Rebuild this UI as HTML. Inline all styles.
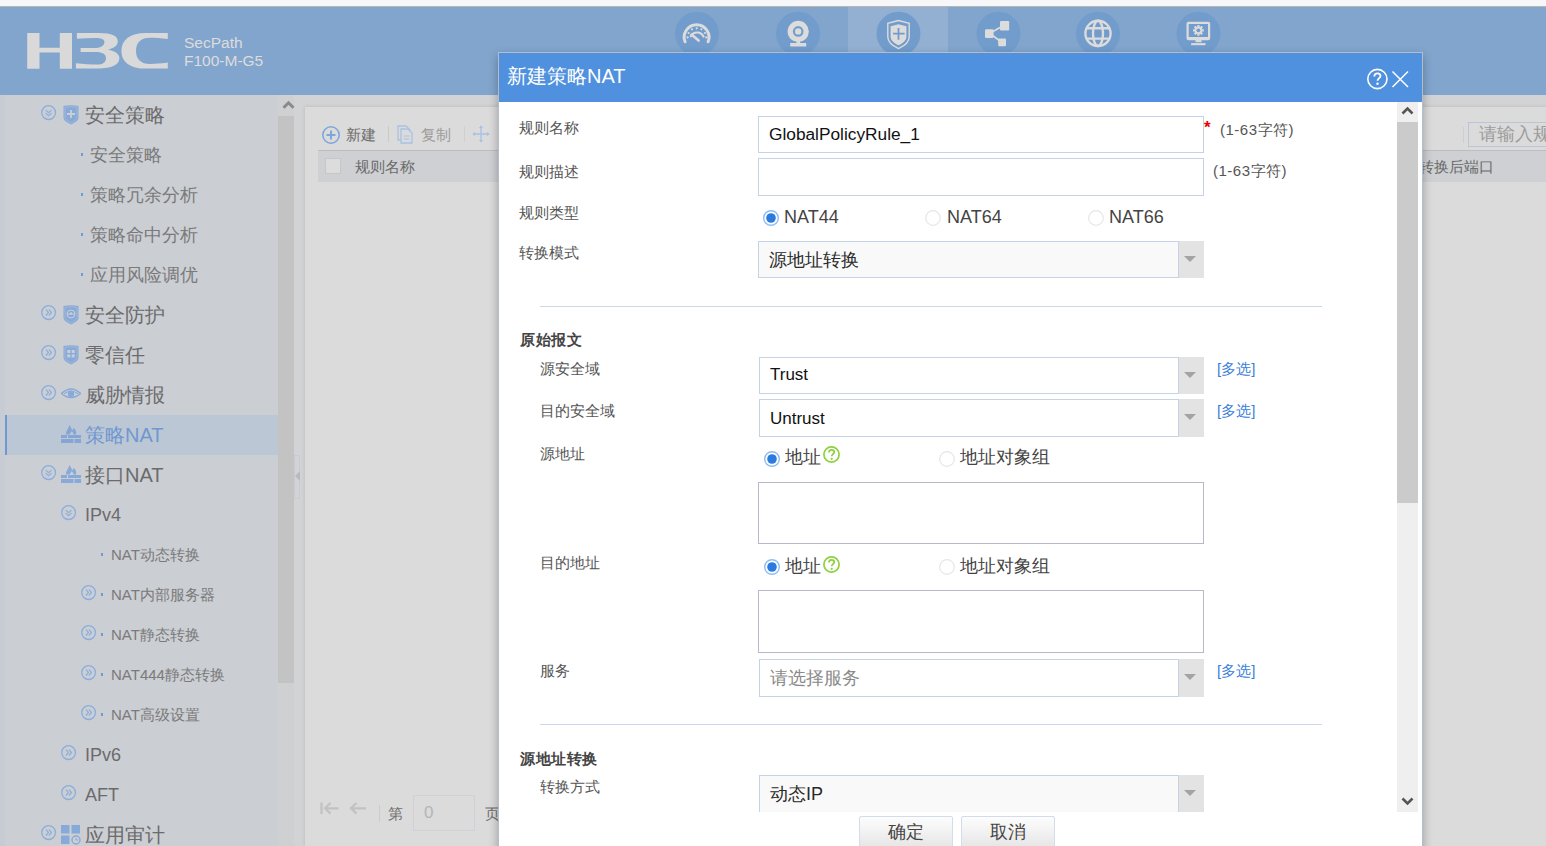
<!DOCTYPE html>
<html><head><meta charset="utf-8">
<style>
*{box-sizing:border-box;margin:0;padding:0}
html,body{width:1546px;height:846px;overflow:hidden;background:#d2d3d5;font-family:"Liberation Sans",sans-serif;}
.a{position:absolute;white-space:nowrap}
#top{left:0;top:0;width:1546px;height:7px;background:#f7f7f9;border-bottom:1px solid #b9b6b0}
#hdr{left:0;top:7px;width:1546px;height:88px;background:#82a5cd}
#side{left:0;top:95px;width:278px;height:751px;background:#cbced3}
#sidestrip{left:0;top:95px;width:5px;height:751px;background:#c7ccd4}
#sb{left:278px;top:95px;width:16px;height:751px;background:#cfd0d1}
#sbthumb{left:278px;top:116px;width:16px;height:567px;background:#c3c3c3}
#panel{left:305px;top:107px;width:1241px;height:739px;background:#dbdbdb;box-shadow:0 0 4px rgba(0,0,0,.12)}
.l1{font-size:20px;color:#6b6b6b;line-height:20px}
.l2{font-size:18px;color:#7a7a7a;line-height:18px}
.l3{font-size:15px;color:#7a7a7a;line-height:15px}
.dot{width:2px;height:3px;margin-top:-1px;background:#6e9ad3}
#dlg{left:498px;top:52px;width:925px;height:800px;background:#fff;border:1px solid #b4bdca;box-shadow:0 4px 9px rgba(0,0,0,.3)}
#dtitle{left:499px;top:53px;width:923px;height:49px;background:#4f91de}
.lbl{font-size:15px;color:#555;line-height:15px}
.inp{background:#fff;border:1px solid #c6d2e6}
.sel{background:#fff;border:1px solid #c6d2e6}
.ddb{background:#e3e3e3}
.arr{width:0;height:0;border-left:6px solid transparent;border-right:6px solid transparent;border-top:6px solid #a3a3a3}
.txt{font-size:17.3px;color:#111;line-height:17px}
.link{font-size:15px;color:#3a80da;line-height:15px}
.rad{width:16px;height:16px;border-radius:50%}
.rad.on{background:#2a7ae0;border:3px solid #fff;box-shadow:0 0 0 1.5px #8cbcf2 inset, 0 0 0 1.5px #8cbcf2}
.rad.off{border:1.5px solid #e6e6e6;background:#fff}
.opt{font-size:18px;color:#444;line-height:18px}
.hr{height:1px;background:#cdd8ea}
.btn{width:94px;height:32px;border:1px solid #d3dcea;border-radius:2px;background:linear-gradient(#fdfdfd,#e6e6e6);font-size:18px;color:#444;text-align:center;line-height:30px}
</style></head><body>
<div id="top" class="a"></div>
<div id="hdr" class="a"></div>
<svg class="a" style="left:0;top:0" width="1546" height="95" viewBox="0 0 1546 95">
<g fill="#d9d9d9">
<path d="M27.2,33.1H39.5V47.8H59.8V33.1H72V68.8H59.8V52.4H39.5V68.8H27.2Z"/>
<path d="M76.9,33.1H99C112,33.1 117.8,36 117.8,41.6C117.8,45.5 114,48.3 108,49.7C115,51 119.4,53.8 119.4,58.1C119.4,65 112,68.6 98,68.6H75.9V63.3C84,64.2 91,64.6 97,64.6C103,64.6 106,62 106,58.2C106,54.3 102.5,52.1 96,52.1H80.6V48H95C101,48 104.4,45.6 104.4,42C104.4,39.4 101.5,38.1 95,38.1C89,38.1 83,38.4 76.9,38.8Z"/>
<path d="M167.8,33.1H146C130,33.1 121.4,40 121.4,50.9C121.4,62 130,68.6 146,68.6H167.8V62.6C161,63.6 155,64 150,64C141,64 136,59 136,50.9C136,42.5 141,37.8 150,37.8C155,37.8 161,38.2 167.8,39Z"/>
</g>
<text x="184" y="48" font-family="Liberation Sans" font-size="15.5" fill="#dcdcdc">SecPath</text>
<text x="184" y="66" font-family="Liberation Sans" font-size="15.5" fill="#dcdcdc">F100-M-G5</text>
<rect x="848" y="7" width="100" height="88" fill="#93b0d2"/>
<g fill="#729ccb">
<circle cx="697" cy="33.7" r="22"/>
<circle cx="798" cy="33.7" r="22"/>
<circle cx="898.5" cy="33.7" r="22"/>
<circle cx="998.5" cy="33.7" r="22"/>
<circle cx="1098" cy="33.7" r="22"/>
<circle cx="1198.5" cy="33.7" r="22"/>
</g>
<g fill="none" stroke="#dcdcdc" stroke-linecap="round">
<!-- gauge -->
<path d="M685.1,41.8 A12.4,12.4 0 1 1 708.1,41.8" stroke-width="3"/>
<path d="M690.8,36.2 A7.2,7.2 0 0 1 703.6,36.6" stroke-width="2.2"/>
<path d="M691.5,34.6 L698.6,40.6" stroke-width="2.6"/>
</g>
<g fill="#dcdcdc">
<circle cx="687.6" cy="37.4" r="1.1"/><circle cx="688.6" cy="33" r="1.1"/><circle cx="692" cy="29.3" r="1.1"/>
<circle cx="696.7" cy="28.3" r="1.1"/><circle cx="701.4" cy="29.3" r="1.1"/><circle cx="705" cy="33" r="1.1"/><circle cx="706.3" cy="37.4" r="1.1"/>
</g>
<!-- webcam -->
<circle cx="798.2" cy="31.4" r="10.6" fill="#dcdcdc"/>
<circle cx="798.2" cy="31.4" r="5.3" fill="#729ccb"/>
<circle cx="798.2" cy="31.4" r="3.2" fill="#dcdcdc"/>
<rect x="796.5" y="40" width="3.6" height="4" fill="#dcdcdc"/>
<rect x="790.2" y="43" width="16" height="3.5" fill="#dcdcdc"/>
<!-- shield -->
<path d="M898.5,20.5 L887.8,23.3 V37 C887.8,42 893,46 898.5,48.6 C904,46 909.2,42 909.2,37 V23.3Z" fill="none" stroke="#dcdcdc" stroke-width="1.4"/>
<path d="M898.5,24.2 L890.6,26.3 V36.8 C890.6,40.5 894.5,43.5 898.5,45.3 C902.5,43.5 906.4,40.5 906.4,36.8 V26.3Z" fill="#dcdcdc"/>
<path d="M893,33.6 H904.6 M898.5,28 V39.7" stroke="#729ccb" stroke-width="1.8"/>
<!-- share -->
<g fill="#dcdcdc">
<rect x="1000" y="21" width="9.2" height="9.4" rx="1.2"/>
<rect x="985" y="29.3" width="8.6" height="8.6" rx="1.2"/>
<rect x="998.2" y="38.4" width="7.8" height="7.8" rx="1.2"/>
</g>
<path d="M992,32 L1001,27 M992,35 L1000,41" stroke="#dcdcdc" stroke-width="1.6"/>
<!-- globe -->
<g fill="none" stroke="#dcdcdc" stroke-width="2.4">
<circle cx="1098" cy="33.4" r="12.6"/>
<ellipse cx="1098" cy="33.4" rx="5" ry="12.6"/>
<path d="M1087,28.3 H1109 M1087,38.6 H1109"/>
</g>
<!-- monitor -->
<g fill="#dcdcdc">
<path d="M1188.5,21.8 H1208.2 A2,2 0 0 1 1210.2,23.8 V38.3 A2,2 0 0 1 1208.2,40.3 H1188.5 A2,2 0 0 1 1186.5,38.3 V23.8 A2,2 0 0 1 1188.5,21.8Z M1188.7,24 V37 H1208 V24Z" fill-rule="evenodd"/>
<rect x="1195.5" y="40" width="6" height="2.2"/>
<rect x="1191.2" y="43.1" width="14.3" height="2.1"/>
</g>
<g transform="translate(1198.4,30.3)">
<g stroke="#dcdcdc" stroke-width="2.2"><path d="M0,-5.4V5.4M-5.4,0H5.4M-3.8,-3.8L3.8,3.8M-3.8,3.8L3.8,-3.8"/></g>
<circle r="3.9" fill="#dcdcdc"/>
<circle r="1.9" fill="#729ccb"/>
</g>
</svg>

<div id="side" class="a"></div>
<div id="sidestrip" class="a"></div>
<div id="sb" class="a"></div>
<div id="sbthumb" class="a"></div>
<div id="panel" class="a"></div>
<!--SIDEBAR-->
<div class="a" style="left:5px;top:415px;width:273px;height:40px;background:#bcc7d5;border-left:2px solid #6e98d0"></div>
<svg class="a" style="left:41px;top:104.7px" width="16" height="16" viewBox="0 0 16 16"><circle cx="7.6" cy="7.6" r="6.9" fill="none" stroke="#8aaedd" stroke-width="1.3"/><path d="M4.7,5.1 L7.6,7.7 L10.5,5.1 M4.7,8.1 L7.6,10.7 L10.5,8.1" fill="none" stroke="#8aaedd" stroke-width="1.2"/></svg>
<svg class="a" style="left:63px;top:105px" width="16" height="20" viewBox="0 0 16 20"><path d="M0.5,1 Q8,-0.5 15.5,1 V13 Q15.5,16 8,19.5 Q0.5,16 0.5,13Z" fill="#88aad8"/><path d="M2,2.3 Q8,1.2 14,2.3 V12.8 Q14,15 8,18 Q2,15 2,12.8Z" fill="none" stroke="#cbced3" stroke-width="0.6" opacity=".6"/><path d="M8,5 V13 M4,9 H12" stroke="#cbced3" stroke-width="1.8"/></svg>
<div class="a l1" style="left:85px;top:105px;color:#6b6b6b">安全策略</div>
<div class="a dot" style="left:81px;top:154px"></div>
<div class="a l2" style="left:90px;top:146px">安全策略</div>
<div class="a dot" style="left:81px;top:194px"></div>
<div class="a l2" style="left:90px;top:186px">策略冗余分析</div>
<div class="a dot" style="left:81px;top:234px"></div>
<div class="a l2" style="left:90px;top:226px">策略命中分析</div>
<div class="a dot" style="left:81px;top:274px"></div>
<div class="a l2" style="left:90px;top:266px">应用风险调优</div>
<svg class="a" style="left:41px;top:304.7px" width="16" height="16" viewBox="0 0 16 16"><circle cx="7.6" cy="7.6" r="6.9" fill="none" stroke="#8aaedd" stroke-width="1.3"/><path d="M4.9,4.7 L7.5,7.6 L4.9,10.5 M7.9,4.7 L10.5,7.6 L7.9,10.5" fill="none" stroke="#8aaedd" stroke-width="1.2"/></svg>
<svg class="a" style="left:63px;top:305px" width="16" height="20" viewBox="0 0 16 20"><path d="M0.5,1 Q8,-0.5 15.5,1 V13 Q15.5,16 8,19.5 Q0.5,16 0.5,13Z" fill="#88aad8"/><path d="M2,2.3 Q8,1.2 14,2.3 V12.8 Q14,15 8,18 Q2,15 2,12.8Z" fill="none" stroke="#cbced3" stroke-width="0.6" opacity=".6"/><circle cx="8" cy="9" r="4" fill="none" stroke="#cbced3" stroke-width="1"/><path d="M4,9 H12" stroke="#cbced3" stroke-width="1"/><circle cx="8" cy="8.5" r="1.2" fill="#cbced3"/></svg>
<div class="a l1" style="left:85px;top:305px;color:#6b6b6b">安全防护</div>
<svg class="a" style="left:41px;top:344.7px" width="16" height="16" viewBox="0 0 16 16"><circle cx="7.6" cy="7.6" r="6.9" fill="none" stroke="#8aaedd" stroke-width="1.3"/><path d="M4.9,4.7 L7.5,7.6 L4.9,10.5 M7.9,4.7 L10.5,7.6 L7.9,10.5" fill="none" stroke="#8aaedd" stroke-width="1.2"/></svg>
<svg class="a" style="left:63px;top:345px" width="16" height="20" viewBox="0 0 16 20"><path d="M0.5,1 Q8,-0.5 15.5,1 V13 Q15.5,16 8,19.5 Q0.5,16 0.5,13Z" fill="#88aad8"/><path d="M2,2.3 Q8,1.2 14,2.3 V12.8 Q14,15 8,18 Q2,15 2,12.8Z" fill="none" stroke="#cbced3" stroke-width="0.6" opacity=".6"/><g fill="#cbced3"><rect x="4.3" y="5" width="3" height="3"/><rect x="8.7" y="5" width="3" height="3"/><rect x="4.3" y="9.4" width="3" height="3"/><rect x="8.7" y="9.4" width="3" height="3"/></g></svg>
<div class="a l1" style="left:85px;top:345px;color:#6b6b6b">零信任</div>
<svg class="a" style="left:41px;top:384.7px" width="16" height="16" viewBox="0 0 16 16"><circle cx="7.6" cy="7.6" r="6.9" fill="none" stroke="#8aaedd" stroke-width="1.3"/><path d="M4.9,4.7 L7.5,7.6 L4.9,10.5 M7.9,4.7 L10.5,7.6 L7.9,10.5" fill="none" stroke="#8aaedd" stroke-width="1.2"/></svg>
<svg class="a" style="left:61px;top:387px" width="20" height="14" viewBox="0 0 20 14"><path d="M0.5,6.5 Q10,-2.5 19.5,6.5 Q10,14.5 0.5,6.5Z" fill="none" stroke="#88aad8" stroke-width="1.6"/><path d="M3,6.8 Q10,1.5 17,6.8" fill="none" stroke="#88aad8" stroke-width="1"/><circle cx="10" cy="6.8" r="3.2" fill="#88aad8"/></svg>
<div class="a l1" style="left:85px;top:385px;color:#6b6b6b">威胁情报</div>
<svg class="a" style="left:61px;top:425px" width="20" height="19" viewBox="0 0 20 19"><path d="M5,9.5 C4.6,6.5 7.5,3.5 8.6,0 C10,2.5 11,4.2 11.2,5.5 C11.8,4.6 12.3,3.8 12.6,2.8 C15.2,5 15.6,8 15,9.5 H12.5 C12.5,8 11.5,6.8 10.5,6.3 C10,7.5 9,8.5 8.5,9.5Z" fill="#85a6d4"/><g fill="#85a6d4"><rect x="0" y="10" width="6" height="3"/><rect x="7" y="10" width="13" height="3"/><rect x="0" y="14" width="12.5" height="4"/><rect x="13.5" y="14" width="6.5" height="4"/></g></svg>
<div class="a l1" style="left:85px;top:425px;color:#6f98d0">策略NAT</div>
<svg class="a" style="left:41px;top:464.7px" width="16" height="16" viewBox="0 0 16 16"><circle cx="7.6" cy="7.6" r="6.9" fill="none" stroke="#8aaedd" stroke-width="1.3"/><path d="M4.7,5.1 L7.6,7.7 L10.5,5.1 M4.7,8.1 L7.6,10.7 L10.5,8.1" fill="none" stroke="#8aaedd" stroke-width="1.2"/></svg>
<svg class="a" style="left:61px;top:465px" width="20" height="19" viewBox="0 0 20 19"><path d="M5,9.5 C4.6,6.5 7.5,3.5 8.6,0 C10,2.5 11,4.2 11.2,5.5 C11.8,4.6 12.3,3.8 12.6,2.8 C15.2,5 15.6,8 15,9.5 H12.5 C12.5,8 11.5,6.8 10.5,6.3 C10,7.5 9,8.5 8.5,9.5Z" fill="#88aad8"/><g fill="#88aad8"><rect x="0" y="10" width="6" height="3"/><rect x="7" y="10" width="13" height="3"/><rect x="0" y="14" width="12.5" height="4"/><rect x="13.5" y="14" width="6.5" height="4"/></g></svg>
<div class="a l1" style="left:85px;top:465px;color:#6b6b6b">接口NAT</div>
<svg class="a" style="left:61px;top:504.7px" width="16" height="16" viewBox="0 0 16 16"><circle cx="7.6" cy="7.6" r="6.9" fill="none" stroke="#8aaedd" stroke-width="1.3"/><path d="M4.7,5.1 L7.6,7.7 L10.5,5.1 M4.7,8.1 L7.6,10.7 L10.5,8.1" fill="none" stroke="#8aaedd" stroke-width="1.2"/></svg>
<div class="a l1" style="left:85px;top:505px;font-size:18px">IPv4</div>
<div class="a dot" style="left:101px;top:554px"></div>
<div class="a l3" style="left:111px;top:547px">NAT动态转换</div>
<svg class="a" style="left:81px;top:584.7px" width="16" height="16" viewBox="0 0 16 16"><circle cx="7.6" cy="7.6" r="6.9" fill="none" stroke="#8aaedd" stroke-width="1.3"/><path d="M4.9,4.7 L7.5,7.6 L4.9,10.5 M7.9,4.7 L10.5,7.6 L7.9,10.5" fill="none" stroke="#8aaedd" stroke-width="1.2"/></svg>
<div class="a dot" style="left:101px;top:594px"></div>
<div class="a l3" style="left:111px;top:587px">NAT内部服务器</div>
<svg class="a" style="left:81px;top:624.7px" width="16" height="16" viewBox="0 0 16 16"><circle cx="7.6" cy="7.6" r="6.9" fill="none" stroke="#8aaedd" stroke-width="1.3"/><path d="M4.9,4.7 L7.5,7.6 L4.9,10.5 M7.9,4.7 L10.5,7.6 L7.9,10.5" fill="none" stroke="#8aaedd" stroke-width="1.2"/></svg>
<div class="a dot" style="left:101px;top:634px"></div>
<div class="a l3" style="left:111px;top:627px">NAT静态转换</div>
<svg class="a" style="left:81px;top:664.7px" width="16" height="16" viewBox="0 0 16 16"><circle cx="7.6" cy="7.6" r="6.9" fill="none" stroke="#8aaedd" stroke-width="1.3"/><path d="M4.9,4.7 L7.5,7.6 L4.9,10.5 M7.9,4.7 L10.5,7.6 L7.9,10.5" fill="none" stroke="#8aaedd" stroke-width="1.2"/></svg>
<div class="a dot" style="left:101px;top:674px"></div>
<div class="a l3" style="left:111px;top:667px">NAT444静态转换</div>
<svg class="a" style="left:81px;top:704.7px" width="16" height="16" viewBox="0 0 16 16"><circle cx="7.6" cy="7.6" r="6.9" fill="none" stroke="#8aaedd" stroke-width="1.3"/><path d="M4.9,4.7 L7.5,7.6 L4.9,10.5 M7.9,4.7 L10.5,7.6 L7.9,10.5" fill="none" stroke="#8aaedd" stroke-width="1.2"/></svg>
<div class="a dot" style="left:101px;top:714px"></div>
<div class="a l3" style="left:111px;top:707px">NAT高级设置</div>
<svg class="a" style="left:61px;top:744.7px" width="16" height="16" viewBox="0 0 16 16"><circle cx="7.6" cy="7.6" r="6.9" fill="none" stroke="#8aaedd" stroke-width="1.3"/><path d="M4.9,4.7 L7.5,7.6 L4.9,10.5 M7.9,4.7 L10.5,7.6 L7.9,10.5" fill="none" stroke="#8aaedd" stroke-width="1.2"/></svg>
<div class="a l1" style="left:85px;top:745px;font-size:18px">IPv6</div>
<svg class="a" style="left:61px;top:784.7px" width="16" height="16" viewBox="0 0 16 16"><circle cx="7.6" cy="7.6" r="6.9" fill="none" stroke="#8aaedd" stroke-width="1.3"/><path d="M4.9,4.7 L7.5,7.6 L4.9,10.5 M7.9,4.7 L10.5,7.6 L7.9,10.5" fill="none" stroke="#8aaedd" stroke-width="1.2"/></svg>
<div class="a l1" style="left:85px;top:785px;font-size:18px">AFT</div>
<svg class="a" style="left:41px;top:824.7px" width="16" height="16" viewBox="0 0 16 16"><circle cx="7.6" cy="7.6" r="6.9" fill="none" stroke="#8aaedd" stroke-width="1.3"/><path d="M4.9,4.7 L7.5,7.6 L4.9,10.5 M7.9,4.7 L10.5,7.6 L7.9,10.5" fill="none" stroke="#8aaedd" stroke-width="1.2"/></svg>
<svg class="a" style="left:61px;top:825px" width="20" height="20" viewBox="0 0 20 20"><g fill="#88aad8"><rect x="0" y="0" width="8.5" height="8.5"/><rect x="10.5" y="0" width="8.5" height="8.5"/><rect x="0" y="10.5" width="8.5" height="8.5"/></g><circle cx="15" cy="15" r="4" fill="none" stroke="#88aad8" stroke-width="1.4"/><path d="M15,13 V15 H17" stroke="#88aad8" stroke-width="1" fill="none"/></svg>
<div class="a l1" style="left:85px;top:825px;color:#6b6b6b">应用审计</div>
<!--/SIDEBAR-->
<!--CONTENT-->
<svg class="a" style="left:321px;top:125px" width="20" height="20" viewBox="0 0 20 20"><circle cx="10" cy="10" r="8.2" fill="none" stroke="#7fa6da" stroke-width="1.6"/><path d="M10,5.5V14.5M5.5,10H14.5" stroke="#7fa6da" stroke-width="2"/></svg>
<div class="a" style="left:346px;top:127px;font-size:15px;line-height:15px;color:#6a6a6a">新建</div>
<div class="a" style="left:388px;top:126px;width:1px;height:16px;background:#c9c9c9"></div>
<svg class="a" style="left:397px;top:125px" width="18" height="19" viewBox="0 0 18 19"><path d="M1,1H9L13,5V15H1Z" fill="none" stroke="#a9c2e3" stroke-width="1.3"/><path d="M4,4H11L15,8V18H4Z" fill="#dbdbdb" stroke="#a9c2e3" stroke-width="1.3"/><path d="M6.5,11H12.5M6.5,14H12.5" stroke="#a9c2e3" stroke-width="1"/></svg>
<div class="a" style="left:421px;top:127px;font-size:15px;line-height:15px;color:#9b9b9b">复制</div>
<div class="a" style="left:464px;top:126px;width:1px;height:16px;background:#cfcfcf"></div>
<svg class="a" style="left:472px;top:125px" width="18" height="18" viewBox="0 0 18 18"><path d="M9,1V17M1,9H17" stroke="#a9c2e3" stroke-width="1.3"/><path d="M9,0.5L6.8,3H11.2ZM9,17.5L6.8,15H11.2ZM0.5,9L3,6.8V11.2ZM17.5,9L15,6.8V11.2Z" fill="#a9c2e3"/></svg>
<div class="a" style="left:318px;top:150px;width:1228px;height:32px;background:#ced0d3;border-top:1px solid #bdbdbd"></div>
<div class="a" style="left:325px;top:158px;width:16px;height:16px;background:#dcdcdc;border:1px solid #c6c6c6"></div>
<div class="a" style="left:355px;top:159px;font-size:15px;line-height:15px;color:#6a6a6a">规则名称</div>
<div class="a" style="left:1419px;top:159px;font-size:15px;line-height:15px;color:#6a6a6a">转换后端口</div>
<div class="a" style="left:1463px;top:127px;width:1px;height:16px;background:#cfcfcf"></div>
<div class="a" style="left:1468px;top:122px;width:100px;height:25px;border:1px solid #bcc5d6;background:#dbdbdb"></div>
<div class="a" style="left:1479px;top:125px;font-size:18px;line-height:18px;color:#9d9d9d">请输入规则</div>
<svg class="a" style="left:320px;top:802px" width="50" height="14" viewBox="0 0 50 14"><g fill="none" stroke="#c2c2c2" stroke-width="2.2"><path d="M1.5,0.5V12"/><path d="M18.5,6.3H5M10.5,1L5,6.3L10.5,11.6"/><path d="M46,6.3H31M36.5,1L31,6.3L36.5,11.6"/></g></svg>
<div class="a" style="left:379px;top:805px;width:1px;height:17px;background:#cccccc"></div>
<div class="a" style="left:388px;top:806px;font-size:15px;line-height:15px;color:#707070">第</div>
<div class="a" style="left:413px;top:795px;width:62px;height:36px;border:1px solid #d0d0d6"></div>
<div class="a" style="left:424px;top:804px;font-size:17px;line-height:17px;color:#b5b5b5">0</div>
<div class="a" style="left:485px;top:806px;font-size:15px;line-height:15px;color:#707070">页</div>
<div class="a" style="left:294px;top:455px;width:6px;height:44px;border:1px solid #c8cad8"></div>
<div class="a" style="left:295px;top:471px;width:0;height:0;border-top:5px solid transparent;border-bottom:5px solid transparent;border-right:5px solid #b9b9b9"></div>
<div class="a" style="left:278px;top:95px;width:16px;height:21px;background:#cfd0d1"></div>
<svg class="a" style="left:282px;top:98px" width="13" height="12" viewBox="0 0 13 12"><path d="M1.5,9.8L6.5,4.8L11.5,9.8" fill="none" stroke="#8a8a8a" stroke-width="3"/></svg>
<!--/CONTENT-->
<div id="dlg" class="a"></div>
<div id="dtitle" class="a"></div>
<!--DIALOG-->
<div class="a" style="left:507px;top:66px;font-size:20px;line-height:20px;color:#fff">新建策略NAT</div>
<svg class="a" style="left:1366px;top:68px" width="46" height="22" viewBox="0 0 46 22"><circle cx="11.4" cy="11" r="9.6" fill="none" stroke="#fff" stroke-width="1.6"/><path d="M8.3,8.4 C8.3,6.3 9.7,5.3 11.4,5.3 C13.1,5.3 14.5,6.4 14.5,8 C14.5,10 11.5,10.3 11.5,12.8" fill="none" stroke="#fff" stroke-width="1.8"/><circle cx="11.5" cy="15.8" r="1.2" fill="#fff"/><path d="M26.5,3.5 L42,19 M42,3.5 L26.5,19" stroke="#fff" stroke-width="1.5"/></svg>
<div class="a" style="left:1397px;top:102px;width:21px;height:710px;background:#efefef"></div>
<div class="a" style="left:1397px;top:122px;width:21px;height:381px;background:#cbcbcb"></div>
<svg class="a" style="left:1401px;top:105px" width="13" height="12" viewBox="0 0 13 12"><path d="M1.5,8.5L6.5,3.5L11.5,8.5" fill="none" stroke="#555" stroke-width="2.6"/></svg>
<svg class="a" style="left:1401px;top:795px" width="13" height="12" viewBox="0 0 13 12"><path d="M1.5,3.5L6.5,8.5L11.5,3.5" fill="none" stroke="#555" stroke-width="2.6"/></svg>
<div class="a lbl" style="left:519px;top:120px;">规则名称</div>
<div class="a lbl" style="left:519px;top:163.5px;">规则描述</div>
<div class="a lbl" style="left:519px;top:205px;">规则类型</div>
<div class="a lbl" style="left:519px;top:245px;">转换模式</div>
<div class="a inp" style="left:758px;top:116px;width:446px;height:37px"></div>
<div class="a txt" style="left:769px;top:126px">GlobalPolicyRule_1</div>
<div class="a" style="left:1204px;top:119px;font-size:17px;line-height:17px;color:#e00;font-weight:bold">*</div>
<div class="a lbl" style="left:1220px;top:121.5px;letter-spacing:0.5px">(1-63字符)</div>
<div class="a inp" style="left:758px;top:158px;width:446px;height:38px"></div>
<div class="a lbl" style="left:1213px;top:163px;letter-spacing:0.5px">(1-63字符)</div>
<svg class="a" style="left:763px;top:210px" width="16" height="16" viewBox="0 0 16 16"><circle cx="8" cy="8" r="7.3" fill="#fff" stroke="#8cbcf2" stroke-width="1.4"/><circle cx="8" cy="8" r="4.8" fill="#2a7ae0"/></svg>
<div class="a opt" style="left:784px;top:208px">NAT44</div>
<svg class="a" style="left:925px;top:210px" width="16" height="16" viewBox="0 0 16 16"><circle cx="8" cy="8" r="7.3" fill="#fff" stroke="#e6e6e6" stroke-width="1.2"/></svg>
<div class="a opt" style="left:947px;top:208px">NAT64</div>
<svg class="a" style="left:1088px;top:210px" width="16" height="16" viewBox="0 0 16 16"><circle cx="8" cy="8" r="7.3" fill="#fff" stroke="#e6e6e6" stroke-width="1.2"/></svg>
<div class="a opt" style="left:1109px;top:208px">NAT66</div>
<div class="a" style="left:758px;top:241px;width:446px;height:37px;background:#e3e3e3"></div><div class="a" style="left:758px;top:241px;width:421px;height:37px;background:#f9f9f9;border:1px solid #c6d2e6"></div><div class="a arr" style="left:1183.7px;top:255.7px"></div><div class="a" style="left:769px;top:250.6px;font-size:18px;line-height:18px;color:#2a2a2a">源地址转换</div>
<div class="a hr" style="left:540px;top:306px;width:782px"></div>
<div class="a" style="left:520px;top:331.5px;font-size:15px;line-height:15px;color:#444;font-weight:bold;letter-spacing:0.5px">原始报文</div>
<div class="a lbl" style="left:539.5px;top:361px;">源安全域</div>
<div class="a" style="left:759px;top:357px;width:445px;height:37px;background:#e3e3e3"></div><div class="a" style="left:759px;top:357px;width:420px;height:37px;background:#fff;border:1px solid #c6d2e6"></div><div class="a arr" style="left:1183.7px;top:371.7px"></div><div class="a" style="left:770px;top:366.3px;font-size:17px;line-height:17px;color:#111">Trust</div>
<div class="a link" style="left:1217px;top:361px">[多选]</div>
<div class="a lbl" style="left:539.5px;top:403px;">目的安全域</div>
<div class="a" style="left:759px;top:399px;width:445px;height:38px;background:#e3e3e3"></div><div class="a" style="left:759px;top:399px;width:420px;height:38px;background:#fff;border:1px solid #c6d2e6"></div><div class="a arr" style="left:1183.7px;top:414.2px"></div><div class="a" style="left:770px;top:409.5px;font-size:17px;line-height:17px;color:#111">Untrust</div>
<div class="a link" style="left:1217px;top:403px">[多选]</div>
<div class="a lbl" style="left:539.5px;top:446.3px;">源地址</div>
<svg class="a" style="left:764px;top:450.5px" width="16" height="16" viewBox="0 0 16 16"><circle cx="8" cy="8" r="7.3" fill="#fff" stroke="#8cbcf2" stroke-width="1.4"/><circle cx="8" cy="8" r="4.8" fill="#2a7ae0"/></svg>
<div class="a opt" style="left:785px;top:448px">地址</div>
<svg class="a" style="left:823px;top:446px" width="17" height="17" viewBox="0 0 17 17"><circle cx="8.5" cy="8.5" r="7.6" fill="none" stroke="#8fd13f" stroke-width="1.7"/><path d="M5.9,6.6 C5.9,4.7 7.1,3.8 8.5,3.8 C10,3.8 11.2,4.8 11.2,6.2 C11.2,8 8.7,8.2 8.7,10.2" fill="none" stroke="#8fd13f" stroke-width="1.8"/><circle cx="8.7" cy="12.8" r="1.15" fill="#8fd13f"/></svg>
<svg class="a" style="left:938.5px;top:450.5px" width="16" height="16" viewBox="0 0 16 16"><circle cx="8" cy="8" r="7.3" fill="#fff" stroke="#e6e6e6" stroke-width="1.2"/></svg>
<div class="a opt" style="left:959.5px;top:448px">地址对象组</div>
<div class="a" style="left:758px;top:482px;width:446px;height:62px;border:1px solid #b6b9cb"></div>
<div class="a lbl" style="left:540px;top:555px;">目的地址</div>
<svg class="a" style="left:764px;top:559px" width="16" height="16" viewBox="0 0 16 16"><circle cx="8" cy="8" r="7.3" fill="#fff" stroke="#8cbcf2" stroke-width="1.4"/><circle cx="8" cy="8" r="4.8" fill="#2a7ae0"/></svg>
<div class="a opt" style="left:785px;top:557.2px">地址</div>
<svg class="a" style="left:823px;top:555.5px" width="17" height="17" viewBox="0 0 17 17"><circle cx="8.5" cy="8.5" r="7.6" fill="none" stroke="#8fd13f" stroke-width="1.7"/><path d="M5.9,6.6 C5.9,4.7 7.1,3.8 8.5,3.8 C10,3.8 11.2,4.8 11.2,6.2 C11.2,8 8.7,8.2 8.7,10.2" fill="none" stroke="#8fd13f" stroke-width="1.8"/><circle cx="8.7" cy="12.8" r="1.15" fill="#8fd13f"/></svg>
<svg class="a" style="left:938.5px;top:559px" width="16" height="16" viewBox="0 0 16 16"><circle cx="8" cy="8" r="7.3" fill="#fff" stroke="#e6e6e6" stroke-width="1.2"/></svg>
<div class="a opt" style="left:959.5px;top:557.2px">地址对象组</div>
<div class="a" style="left:758px;top:590px;width:446px;height:63px;border:1px solid #b6b9cb"></div>
<div class="a lbl" style="left:540px;top:663px;">服务</div>
<div class="a" style="left:759px;top:659px;width:445px;height:38px;background:#e3e3e3"></div><div class="a" style="left:759px;top:659px;width:420px;height:38px;background:#fff;border:1px solid #c6d2e6"></div><div class="a arr" style="left:1183.7px;top:674.2px"></div><div class="a" style="left:770px;top:668.7px;font-size:18px;line-height:18px;color:#8a8a8a">请选择服务</div>
<div class="a link" style="left:1217px;top:663px">[多选]</div>
<div class="a hr" style="left:540px;top:724px;width:782px"></div>
<div class="a" style="left:520px;top:750.8px;font-size:15px;line-height:15px;color:#444;font-weight:bold;letter-spacing:0.5px">源地址转换</div>
<div class="a lbl" style="left:539.5px;top:779.4px;">转换方式</div>
<div class="a" style="left:499px;top:775px;width:895px;height:37px;overflow:hidden"><div class="a" style="left:260px;top:0px;width:445px;height:38px;background:#e3e3e3"></div><div class="a" style="left:260px;top:0px;width:420px;height:38px;background:#f9f9f9;border:1px solid #c6d2e6"></div><div class="a arr" style="left:684.7px;top:15.2px"></div><div class="a" style="left:271px;top:9.7px;font-size:18px;line-height:18px;color:#2a2a2a">动态IP</div></div>
<div class="a btn" style="left:859px;top:816px">确定</div>
<div class="a btn" style="left:960.5px;top:816px">取消</div>
<!--/DIALOG-->
</body></html>
